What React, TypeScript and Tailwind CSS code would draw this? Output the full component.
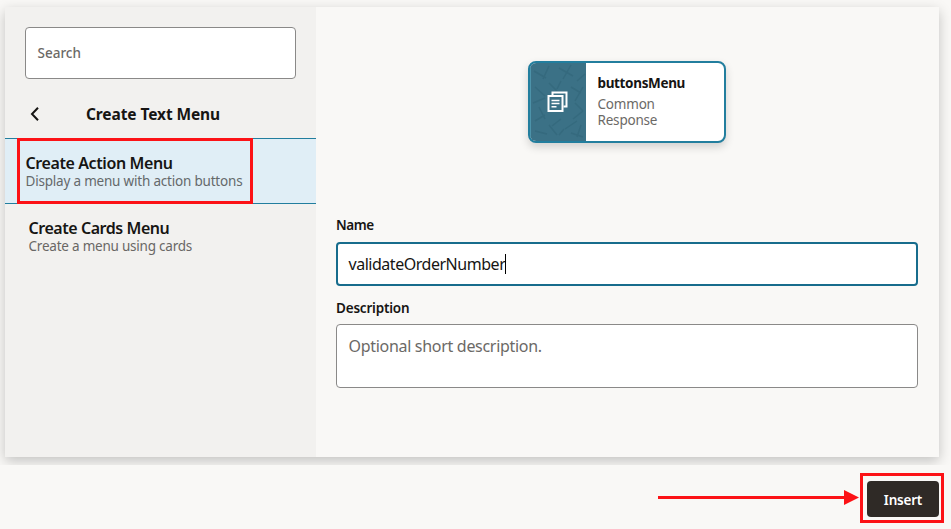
const strokes = [
  "M3 8l12 7M18 3l-6 13M28 5l14 8M40 2l-8 14M46 18l8 -7M4 24l10 9M18 20l8 8M30 18l-4 8M40 24l10 6M52 24l-8 14",
  "M2 40l12 -5M8 44l6 12M4 58l10 -6M44 40l8 8M42 56l10 -8M18 62l8 10M30 56l-9 7M34 66l12 -8M40 70l12 4M4 68l12 3M50 62l-4 12M28 72l5 -6",
];

function SearchBox() {
  return (
    <div className="mx-5 mt-5 flex h-[52px] items-center rounded-[4px] border border-[#8a8988] bg-white px-[11.5px]">
      <span className="text-[13.5px] font-medium text-[#6b6966]">Search</span>
    </div>
  );
}

function Sidebar() {
  return (
    <aside className="flex w-[311px] shrink-0 flex-col bg-[#f2f1ef]">
      <SearchBox />
      <div className="flex h-[59px] items-center pt-[10px] pl-[25px]">
        <svg width="9" height="14" viewBox="0 0 9 14" fill="none" stroke="#161513" strokeWidth="2">
          <path d="M8 .8 2 7l6 6.2" />
        </svg>
        <h2 className="ml-[47px] pt-[2px] text-[15.5px] font-bold tracking-[-0.1px] whitespace-nowrap">Create Text Menu</h2>
      </div>
      <div className="relative flex h-[66px] flex-col border-y border-[#227e9e] bg-[#e0eef6] pt-[14px] pl-[20.5px]">
        <span className="text-[16px] leading-[20px] font-semibold tracking-[-0.4px]">Create Action Menu</span>
        <span className="text-[13.5px] leading-4 tracking-[-0.2px] text-[#65696b]">Display a menu with action buttons</span>
        <div className="absolute top-[-1px] left-3 h-[66px] w-[236px] border-[3px] border-[#fc1216]" />
      </div>
      <div className="flex flex-col pt-[14px] pl-[23.5px]">
        <span className="text-[16px] leading-[20px] font-semibold tracking-[-0.45px]">Create Cards Menu</span>
        <span className="text-[13.5px] leading-4 tracking-[-0.22px] text-[#696765]">Create a menu using cards</span>
      </div>
    </aside>
  );
}

function ComponentCard() {
  return (
    <div className="mt-[54px] ml-[191.5px] flex h-[82px] w-[198.5px] overflow-hidden rounded-[8px] border-2 border-[#227e9e] bg-white shadow-[0_4px_8px_rgba(0,0,0,0.16)]">
      <div className="w-14 shrink-0 border-l border-[#4d93aa] bg-[#3b7186]">
        <svg width="55" height="78" viewBox="0 0 55 78" fill="none">
          <g stroke="#356a7e" strokeWidth="1.5">
            {strokes.map((d) => (
              <path key={d} d={d} />
            ))}
          </g>
          <g stroke="#fff" strokeWidth="2">
            <path d="M21.5 32v-2.5h14v14h-3" />
            <path d="M17.5 33h14v15h-14z" />
            <path d="M20.5 37.5h8M20.5 40.5h8M20.5 43.8h5" strokeWidth="1.5" />
          </g>
        </svg>
      </div>
      <div className="flex flex-col pt-3 pl-3">
        <span className="text-[13.5px] leading-[17px] font-bold tracking-[-0.35px]">buttonsMenu</span>
        <span className="mt-1 text-[13.5px] leading-4 tracking-[-0.2px] text-[#6b6966]">
          Common
          <br />
          Response
        </span>
      </div>
    </div>
  );
}

function DetailForm() {
  return (
    <main className="flex min-w-0 flex-1 flex-col pr-[21px] pl-5">
      <ComponentCard />
      <label className="mt-[71px] h-[28px] text-[13.5px] leading-[22px] font-semibold tracking-[-0.4px]">Name</label>
      <div className="flex h-11 items-center rounded-[4px] border-2 border-[#176c8c] bg-white pl-[10.5px]">
        <span className="text-[16px] tracking-[-0.47px]">validateOrderNumber</span>
        <span className="h-5 w-px bg-black" />
      </div>
      <label className="mt-3 h-[26px] text-[13.5px] leading-[21px] font-semibold tracking-[-0.2px]">Description</label>
      <div className="h-16 rounded-[4px] border border-[#8a8988] bg-white pt-[9px] pl-[11.5px]">
        <span className="block text-[16px] leading-6 tracking-[-0.3px] text-[#6b6966]">Optional short description.</span>
      </div>
    </main>
  );
}

export default function App() {
  return (
    <div className="h-[529px] w-[951px] overflow-hidden bg-[#f9f8f6] font-['Noto_Sans',sans-serif] text-[#161513]">
      <div className="h-[465px] overflow-hidden pt-[7px] pl-[5px]">
        <section className="flex h-[450px] w-[934px] bg-[#f9f8f6] shadow-[0_4px_12px_rgba(0,0,0,0.22)]">
          <Sidebar />
          <DetailForm />
        </section>
      </div>
      <footer className="flex items-start justify-end pt-2 pr-[7px]">
        <svg className="mt-[17px]" width="202" height="15" viewBox="0 0 202 15">
          <path d="M0 6h187v3H0z" fill="#fc1216" />
          <path d="M186 0l15 7.5L186 15z" fill="#fc1216" />
        </svg>
        <div className="flex h-[50px] w-[84px] border-[3px] border-[#fc1216] pt-[5px] pl-1">
          <button className="h-9 w-[72px] rounded-[4px] bg-[#2f2a26] pt-[2px] text-[13.5px] font-semibold tracking-[-0.2px] text-white">Insert</button>
        </div>
      </footer>
    </div>
  );
}
